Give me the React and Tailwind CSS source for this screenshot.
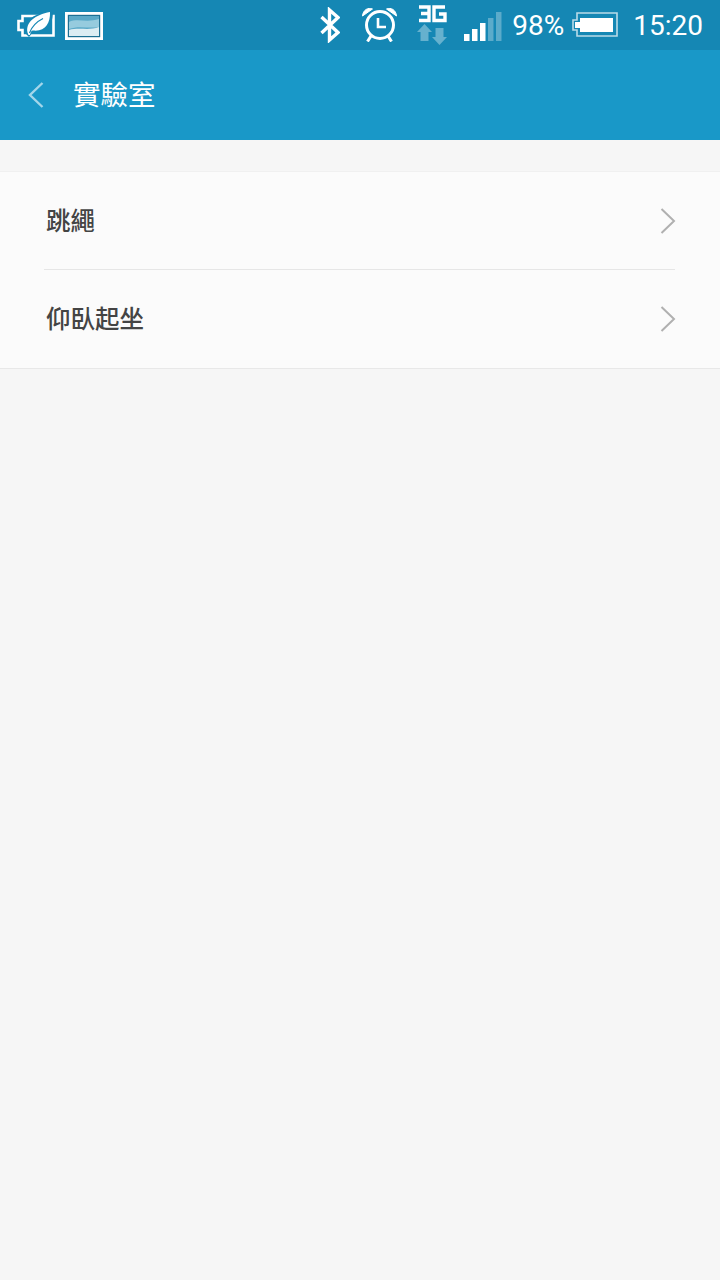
import React from 'react';

const LeafBattery = () => (
  <svg width="38" height="26" viewBox="0 0 38 26" className="block">
    <path d="M5.5 4H36.5V23.5H5.5V18H1.5V9H5.5Z" fill="none" stroke="#fff" strokeWidth="2.6" />
    <path d="M8 21C6 9 16 1 36 -1C36 13 30 21 16 20L12 25Z" fill="#1587b4" />
    <path d="M10.5 20.5C8.5 10 18 3 33 0C33.5 11 28 20 16 18.5C15 18.4 14 18.8 13 23L11.5 23Z" fill="#fff" />
    <path d="M12.5 21C15 14 19 10 26 6.5" fill="none" stroke="#1587b4" strokeWidth="1.2" />
  </svg>
);

const ImageNote = () => (
  <svg width="38" height="28" viewBox="0 0 38 28" className="block">
    <rect x="1.4" y="1.4" width="35.2" height="25.2" fill="#1c6f93" stroke="#fff" strokeWidth="2.8" />
    <rect x="4" y="4" width="30" height="20" fill="#5aa9c8" />
    <path d="M4 10C12 6 22 11 34 7V15C24 17 14 13 4 17Z" fill="#96cbde" />
    <path d="M4 18C14 15 24 19 34 15V24H4Z" fill="#dcedf3" />
  </svg>
);

const Bluetooth = () => (
  <svg width="20" height="36" viewBox="0 0 20 36" className="block">
    <path d="M1.5 10L18 25.5L9.5 33V3L18 10.5L1.5 26" fill="none" stroke="#fff" strokeWidth="3.4" />
  </svg>
);

const Alarm = () => (
  <svg width="35" height="34" viewBox="0 0 35 34" className="block">
    <circle cx="18" cy="17" r="13.5" fill="none" stroke="#fff" strokeWidth="3" />
    <path d="M16 10V19H24" fill="none" stroke="#fff" strokeWidth="2.6" />
    <path d="M0.5 8C1 2 6 -1 10.5 1Z M34.5 8C34 2 29 -1 24.5 1Z" fill="#fff" stroke="#fff" strokeWidth="1" />
    <path d="M9 28L5.5 33.5M26 28L29.5 33.5" fill="none" stroke="#fff" strokeWidth="3" />
  </svg>
);

const Network = () => (
  <svg width="30" height="40" viewBox="0 0 30 40" className="block">
    <path d="M2 2H12V15.5H2M4 8.5H12" fill="none" stroke="#fff" strokeWidth="3.4" />
    <path d="M28 2H17V15.5H28V9H22" fill="none" stroke="#fff" strokeWidth="3.4" />
    <path d="M0 27L7.5 19L15 27H11.5V36H3.5V27Z" fill="#fff" fillOpacity="0.35" />
    <path d="M15 32L22.5 40L30 32H26.5V23H18.5V32Z" fill="#fff" fillOpacity="0.35" />
  </svg>
);

const Signal = () => (
  <svg width="38" height="29" viewBox="0 0 38 29" className="block">
    <rect x="0" y="22" width="5.5" height="7" fill="#fff" />
    <rect x="8" y="17" width="5.5" height="12" fill="#fff" />
    <rect x="16" y="11" width="5.5" height="18" fill="#fff" />
    <rect x="24" y="6" width="5.5" height="23" fill="#fff" fillOpacity="0.3" />
    <rect x="32" y="0" width="5.5" height="29" fill="#fff" fillOpacity="0.3" />
  </svg>
);

const Battery = () => (
  <svg width="46" height="25" viewBox="0 0 46 25" className="block">
    <path d="M5 1H45V24H5V18H1V8H5Z" fill="none" stroke="#fff" strokeOpacity="0.7" strokeWidth="1.6" />
    <path d="M8 6H41V20H8V16H3V10H8Z" fill="#fff" />
  </svg>
);

const Chevron = () => (
  <svg width="16" height="26" viewBox="0 0 16 26" className="block">
    <path d="M1.5 1L14 13L1.5 25" fill="none" stroke="#b0b0b0" strokeWidth="2" />
  </svg>
);

const Row = ({ label, last }) => (
  <div className="relative flex h-[98px] items-center justify-between pl-[46px] pr-[44px]">
    <span className="mt-[3px] text-[24.5px] font-medium text-[#444444]">{label}</span>
    <Chevron />
    {!last && <div className="absolute bottom-0 left-[44px] right-[45px] h-px bg-[#e6e6e6]" />}
  </div>
);

export default function App() {
  return (
    <div className="flex min-h-[1280px] flex-col bg-[#f6f6f6] font-['Roboto','Noto_Sans_CJK_TC',sans-serif]">
      <div className="flex h-[50px] items-start bg-[#1587b4] pl-[17px] pr-[17px] text-[28px] leading-none text-white">
        <div className="mt-[12px]"><LeafBattery /></div>
        <div className="ml-[10px] mt-[12px]"><ImageNote /></div>
        <div className="ml-auto mt-[7px]"><Bluetooth /></div>
        <div className="ml-[22px] mt-[8px]"><Alarm /></div>
        <div className="ml-[20px] mt-[5px]"><Network /></div>
        <div className="ml-[17px] mt-[12px]"><Signal /></div>
        <span className="ml-[10px] mt-[12px]">98%</span>
        <div className="ml-[8px] mt-[12px]"><Battery /></div>
        <span className="ml-[15px] mt-[12px]">15:20</span>
      </div>

      <div className="flex h-[90px] items-center bg-[#1998c8] pl-[28px] text-white">
        <svg width="16" height="26" viewBox="0 0 16 26" className="block">
          <path d="M14.5 1L2 13L14.5 25" fill="none" stroke="#a3d6ea" strokeWidth="2.4" />
        </svg>
        <span className="ml-[29px] mt-[2px] text-[27.5px]">實驗室</span>
      </div>

      <div className="mt-[31px] border-y border-t-[#f0f0f0] border-b-[#e8e8e8] bg-[#fbfbfb]">
        <Row label="跳繩" />
        <Row label="仰臥起坐" last />
      </div>
    </div>
  );
}
